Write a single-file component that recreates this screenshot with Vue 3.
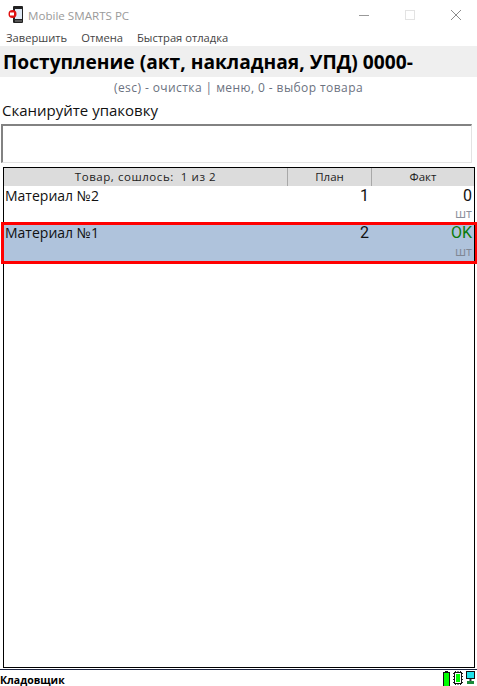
<template>
  <div class="window">
    <div class="titlebar">
      <svg class="app-icon" width="16" height="18" viewBox="0 0 16 18">
        <rect x="5" y="0" width="10" height="17" rx="1" fill="#222" />
        <rect x="7" y="3" width="7" height="10" fill="#dfe9f5" />
        <rect x="7" y="14" width="7" height="2" fill="#555" />
        <circle cx="4.5" cy="8" r="4" fill="#e01010" />
        <rect x="2" y="6.5" width="4" height="3" fill="#fff" />
      </svg>
      <span class="app-title">Mobile SMARTS PC</span>
      <div class="win-buttons">
        <svg width="12" height="12" viewBox="0 0 12 12"><path d="M1 6.5h10" stroke="#999" fill="none" /></svg>
        <svg width="12" height="12" viewBox="0 0 12 12"><rect x="1.5" y="1.5" width="9" height="9" stroke="#e3e3e3" fill="none" /></svg>
        <svg width="12" height="12" viewBox="0 0 12 12"><path d="M1 1l10 10M11 1L1 11" stroke="#8c8c8c" fill="none" /></svg>
      </div>
    </div>

    <div class="menu">
      <span v-for="item in menu" :key="item">{{ item }}</span>
    </div>

    <div class="heading">Поступление (акт, накладная, УПД) 0000-</div>
    <div class="hint">(esc) - очистка | меню, 0 - выбор товара</div>
    <div class="prompt">Сканируйте упаковку</div>
    <div class="scan-input"></div>

    <div class="table">
      <div class="thead">
        <div class="th th-name">Товар, сошлось:&nbsp; 1 из 2</div>
        <div class="th th-plan">План</div>
        <div class="th th-fact">Факт</div>
      </div>
      <div
        v-for="row in rows"
        :key="row.name"
        class="row"
        :class="{ selected: row.selected }"
      >
        <div class="cell-name">{{ row.name }}</div>
        <div class="cell-plan">{{ row.plan }}</div>
        <div class="cell-fact">
          <span class="fact-val" :class="{ ok: row.fact === 'OK' }">{{ row.fact }}</span>
          <span class="unit">шт</span>
        </div>
      </div>
    </div>

    <div class="statusbar">
      <span class="user">Кладовщик</span>
      <div class="status-icons">
        <svg width="7" height="16" viewBox="0 0 7 16">
          <rect x="2" y="0" width="3" height="1" fill="#111" />
          <rect x="0.5" y="1.5" width="6" height="14" fill="#0f0" stroke="#111" />
        </svg>
        <svg width="10" height="14" viewBox="0 0 10 14">
          <path d="M0 2.5h10M0 5.5h10M0 8.5h10M0 11.5h10M2.5 0v14M5 0v14M7.5 0v14" stroke="#222" fill="none" />
          <rect x="1.5" y="1.5" width="7" height="11" fill="#fff" stroke="#111" />
          <rect x="3" y="3" width="4" height="8" fill="#0f0" />
        </svg>
        <svg width="9" height="13" viewBox="0 0 9 13">
          <rect x="0.5" y="0.5" width="8" height="7" fill="#1fe3ec" stroke="#111" />
          <rect x="3.5" y="8" width="2" height="2" fill="#333" />
          <rect x="1" y="10" width="7" height="3" fill="#1a8a3a" />
        </svg>
      </div>
    </div>
  </div>
</template>

<script setup>
const menu = ['Завершить', 'Отмена', 'Быстрая отладка']

const rows = [
  { name: 'Материал №2', plan: 1, fact: '0', selected: false },
  { name: 'Материал №1', plan: 2, fact: 'OK', selected: true },
]
</script>

<style>
html, body {
  margin: 0;
  background: #fff;
  overflow: hidden;
}
</style>

<style scoped>
.window {
  width: 477px;
  height: 686px;
  display: flex;
  flex-direction: column;
  background: #fff;
  font-family: "Open Sans", "Noto Sans", sans-serif;
  color: #111;
  overflow: hidden;
}

.titlebar {
  height: 30px;
  flex-shrink: 0;
  display: flex;
  align-items: center;
  padding-left: 8px;
  box-sizing: border-box;
}

.app-icon {
  margin-right: 4px;
}

.app-title {
  font-size: 11.6px;
  color: #9a9a9a;
}

.win-buttons {
  margin-left: auto;
  display: flex;
  gap: 34px;
  padding-right: 15px;
}

.menu {
  height: 16px;
  flex-shrink: 0;
  display: flex;
  gap: 14px;
  padding-left: 6px;
  font-size: 11.2px;
  line-height: 16px;
  color: #444;
}

.heading {
  height: 31px;
  flex-shrink: 0;
  background: #efefef;
  padding-left: 3px;
  font-size: 19.2px;
  font-weight: 700;
  line-height: 31px;
  color: #000;
  white-space: nowrap;
}

.hint {
  height: 22px;
  flex-shrink: 0;
  text-align: center;
  font-size: 12px;
  letter-spacing: 0.42px;
  line-height: 22px;
  color: #6b7280;
}

.prompt {
  height: 25px;
  flex-shrink: 0;
  padding-left: 2px;
  font-size: 15px;
  line-height: 23px;
  color: #111;
}

.scan-input {
  height: 39px;
  width: 471px;
  flex-shrink: 0;
  margin-left: 1px;
  box-sizing: border-box;
  border: 1px solid #e3e3e3;
  border-top: 2px solid #828282;
  border-left: 2px solid #828282;
}

.table {
  width: 472px;
  height: 501px;
  flex-shrink: 0;
  margin: 4px 0 0 3px;
  box-sizing: border-box;
  border: 1px solid #000;
}

.thead {
  height: 18px;
  display: grid;
  grid-template-columns: 283px 84px 1fr;
  background: #dcdcdc;
  font-size: 11.5px;
  line-height: 18px;
  text-align: center;
  color: #222;
}

.th-name {
  letter-spacing: 0.55px;
}

.th-plan,
.th-fact {
  border-left: 1px solid #a8a8a8;
}

.row {
  height: 36px;
  display: grid;
  grid-template-columns: 1fr 84px 105px;
  position: relative;
  font-size: 14px;
}

.row.selected {
  height: 41px;
  padding-top: 1px;
  background: #afc3dc;
}

/* red frame sticks out past the table border */
.row.selected::after {
  content: "";
  position: absolute;
  left: -3px;
  right: -4px;
  top: 0;
  bottom: 0;
  border: 3px solid #f00;
  pointer-events: none;
}

.cell-name {
  padding-left: 1px;
  line-height: 20px;
}

.cell-plan {
  text-align: right;
  font-family: Roboto, sans-serif;
  font-size: 16px;
  line-height: 20px;
}

.cell-fact {
  display: flex;
  flex-direction: column;
  align-items: flex-end;
  padding-right: 2px;
}

.fact-val {
  font-family: Roboto, sans-serif;
  font-size: 16px;
  line-height: 20px;
}

.fact-val.ok {
  color: #0a7a0a;
}

.unit {
  font-size: 12.5px;
  line-height: 14px;
  margin-top: 1px;
  color: #8a8f9c;
}

.selected .unit {
  margin-top: 2px;
  color: #7f8794;
}

.statusbar {
  flex: 1;
  margin-top: 1px;
  border-top: 1px solid #1c2340;
  display: flex;
  align-items: center;
  justify-content: space-between;
  padding-right: 2px;
}

.user {
  font-size: 10.5px;
  font-weight: 700;
  line-height: 14px;
  padding-top: 3px;
  color: #000;
}

.status-icons {
  display: flex;
  align-items: flex-start;
  gap: 3px;
  height: 16px;
}
</style>
